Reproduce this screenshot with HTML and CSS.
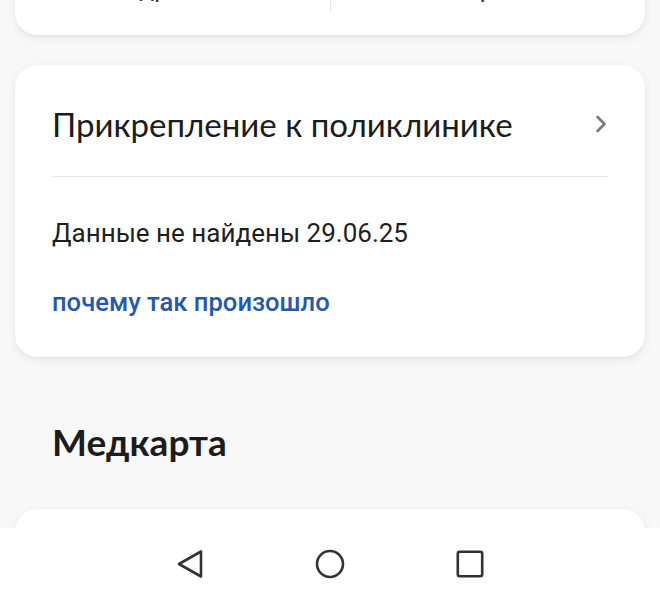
FILE: index.html
```html
<!DOCTYPE html>
<html lang="ru">
<head>
<meta charset="utf-8">
<title>Прикрепление к поликлинике</title>
<link rel="stylesheet" href="styles.css">
</head>
<body>
<div class="screen">
  <div class="scroll">
    <section class="card card-top">
      <div class="cells">
        <div class="cell">Подробнее</div>
        <div class="cell cell-right">Открыть</div>
      </div>
    </section>

    <section class="card card-clinic">
      <div class="card-head">
        <h2 class="card-title">Прикрепление к поликлинике</h2>
        <svg class="chevron" width="12" height="18" viewBox="0 0 12 18" aria-hidden="true">
          <path d="M2.5 2 L9.5 9 L2.5 16" fill="none" stroke="#747b82" stroke-width="2.6" stroke-linecap="round" stroke-linejoin="round"/>
        </svg>
      </div>
      <div class="divider"></div>
      <p class="card-text">Данные не найдены 29.06.25</p>
      <a class="card-link" href="#">почему так произошло</a>
    </section>

    <h1 class="section-title">Медкарта</h1>

    <section class="card card-next"></section>
  </div>

  <nav class="navbar">
    <svg class="nav-icon" width="28" height="30" viewBox="0 0 28 30" aria-hidden="true">
      <path d="M25 2.5 L25 27.5 L3 15 Z" fill="none" stroke="#333" stroke-width="2.6" stroke-linejoin="round"/>
    </svg>
    <svg class="nav-icon" width="30" height="30" viewBox="0 0 30 30" aria-hidden="true">
      <circle cx="15" cy="15" r="13" fill="none" stroke="#333" stroke-width="2.6"/>
    </svg>
    <svg class="nav-icon" width="28" height="28" viewBox="0 0 28 28" aria-hidden="true">
      <rect x="1.8" y="1.8" width="24.4" height="24.4" rx="2" fill="none" stroke="#333" stroke-width="2.6"/>
    </svg>
  </nav>
</div>
</body>
</html>
```

FILE: styles.css
```css
* {
  box-sizing: border-box;
}

html, body {
  margin: 0;
  padding: 0;
}

body {
  width: 660px;
  height: 600px;
  overflow: hidden;
  background: #f8f8f8;
  font-family: Roboto, "Noto Sans", "Liberation Sans", sans-serif;
  color: #1f1f1f;
}

.screen {
  height: 600px;
  display: flex;
  flex-direction: column;
}

.scroll {
  flex: 1;
  overflow: hidden;
  padding: 0 15px;
}

.card {
  background: #ffffff;
  border-radius: 22px;
  box-shadow: 0 3px 10px rgba(0, 0, 0, 0.07), 0 1px 3px rgba(0, 0, 0, 0.04);
}

.card-top {
  margin-top: -40px;
  padding-bottom: 23px;
}

.cells {
  display: grid;
  grid-template-columns: 1fr 1fr;
}

.cell {
  height: 52px;
  padding-top: 14px;
  text-align: center;
  font-size: 25px;
  line-height: 30px;
  color: #333;
}

.cell-right {
  border-left: 1px solid #e4e4e4;
}

.card-clinic {
  margin-top: 30px;
  padding-bottom: 40px;
}

.card-head {
  display: flex;
  align-items: center;
  justify-content: space-between;
  padding: 39px 37px 32px 37px;
}

.card-title {
  margin: 0;
  font-family: Lato, "Open Sans", sans-serif;
  font-weight: 400;
  font-size: 33px;
  line-height: 40px;
  color: #1c1c1c;
}

.chevron {
  display: block;
  margin-right: 1px;
}

.divider {
  height: 1px;
  margin: 0 37px;
  background: #e6e6e6;
}

.card-text {
  margin: 41px 37px 0 37px;
  font-size: 26px;
  line-height: 30px;
  color: #1f1f1f;
}

.card-link {
  display: block;
  margin: 39px 37px 0 37px;
  font-size: 25.6px;
  line-height: 30px;
  font-weight: 500;
  color: #2659a8;
  text-decoration: none;
}

.section-title {
  margin: 63px 37px 0 37px;
  font-family: Lato, "Open Sans", sans-serif;
  font-weight: 700;
  font-size: 37px;
  line-height: 44px;
  color: #1c1c1c;
}

.card-next {
  margin-top: 45px;
  height: 80px;
}

.navbar {
  flex: 0 0 72px;
  background: #ffffff;
  display: flex;
  align-items: center;
  justify-content: center;
  gap: 111px;
}

.nav-icon {
  display: block;
}
```
